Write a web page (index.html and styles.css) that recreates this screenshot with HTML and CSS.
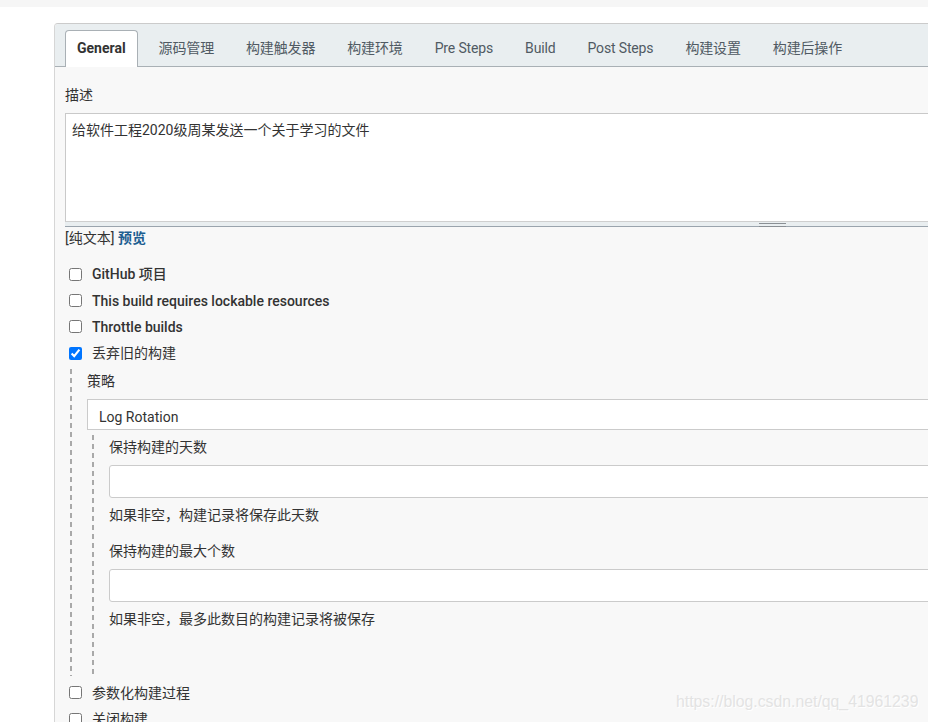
FILE: index.html
```html
<!DOCTYPE html>
<html lang="zh-CN">
<head>
    <meta charset="UTF-8">
    <meta name="viewport" content="width=device-width, initial-scale=1.0">
    <title>General - 配置</title>
    <link rel="stylesheet" href="styles.css">
</head>
<body>
    <div class="top-strip"></div>

    <div class="page">
        <div class="config">
            <div class="tabbar">
                <div class="tab active">General</div>
                <div class="tab">源码管理</div>
                <div class="tab">构建触发器</div>
                <div class="tab">构建环境</div>
                <div class="tab">Pre Steps</div>
                <div class="tab">Build</div>
                <div class="tab">Post Steps</div>
                <div class="tab">构建设置</div>
                <div class="tab">构建后操作</div>
            </div>

            <div class="section">
                <div class="field-label">描述</div>
                <textarea class="description" readonly>给软件工程2020级周某发送一个关于学习的文件</textarea>
                <div class="grip"><span class="grip-handle"></span></div>
                <div class="preview-line">[纯文本] <a class="preview-link" href="#">预览</a></div>

                <div class="options">
                    <label class="option"><input type="checkbox"><span class="option-text">GitHub 项目</span></label>
                    <label class="option"><input type="checkbox"><span class="option-text">This build requires lockable resources</span></label>
                    <label class="option"><input type="checkbox"><span class="option-text">Throttle builds</span></label>
                    <label class="option"><input type="checkbox" checked><span class="option-text cjk">丢弃旧的构建</span></label>
                </div>

                <div class="nested">
                    <div class="field-label">策略</div>
                    <div class="select-box"><span class="select-text">Log Rotation</span></div>

                    <div class="nested inner">
                        <div class="field">
                            <div class="field-label">保持构建的天数</div>
                            <input class="text-input" type="text">
                            <div class="help">如果非空，构建记录将保存此天数</div>
                        </div>
                        <div class="field">
                            <div class="field-label">保持构建的最大个数</div>
                            <input class="text-input" type="text">
                            <div class="help">如果非空，最多此数目的构建记录将被保存</div>
                        </div>
                    </div>
                </div>

                <div class="options after">
                    <label class="option"><input type="checkbox"><span class="option-text cjk">参数化构建过程</span></label>
                    <label class="option"><input type="checkbox"><span class="option-text cjk">关闭构建</span></label>
                </div>
            </div>
        </div>
    </div>

    <div class="watermark">https://blog.csdn.net/qq_41961239</div>
</body>
</html>
```

FILE: styles.css
```css
* {
    margin: 0;
    padding: 0;
    box-sizing: border-box;
}
html, body {
    height: 100%;
    overflow: hidden;
}
body {
    background: #fff;
    color: #333;
    font-family: Roboto, "Noto Sans CJK SC", sans-serif;
    font-size: 14px;
    line-height: 20px;
}
.top-strip {
    height: 7px;
    background: #f6f6f6;
}
.page {
    padding: 16px 0 0 54px;
}
.config {
    width: 1426px;
    border-top: 1px solid #cbcbcb;
    border-left: 1px solid #d6d6d6;
    border-radius: 4px 0 0 0;
    background: #f8f8f8;
    min-height: 700px;
}

/* tabs */
.tabbar {
    display: flex;
    align-items: flex-end;
    gap: 10px;
    height: 43px;
    padding: 0 10px;
    background: #e9eef0;
    border-radius: 4px 0 0 0;
    border-bottom: 1px solid #a9b0b5;
}
.tab {
    height: 37px;
    margin-bottom: -1px;
    padding: 0 10px;
    line-height: 35px;
    border: 1px solid transparent;
    border-bottom: none;
    border-radius: 4px 4px 0 0;
    color: #505a63;
    white-space: nowrap;
    letter-spacing: -0.15px;
}
.tab.active {
    background: #fff;
    border-color: #a9b0b5;
    color: #333;
    font-weight: 700;
    padding: 0 11px;
    letter-spacing: 0;
}

/* form */
.section {
    padding: 18px 0 0 10px;
}
.field-label {
    margin-bottom: 8px;
}
.description {
    display: block;
    width: 100%;
    height: 109px;
    padding: 6px;
    border: 1px solid #c9c9c9;
    border-bottom-color: #cfcfcf;
    background: #fff;
    color: #333;
    font: inherit;
    resize: none;
    outline: none;
}
.grip {
    height: 5px;
    background: #e9eef0;
    border-bottom: 1px solid #9aa4ad;
    display: flex;
    justify-content: center;
}
.grip-handle {
    width: 27px;
    height: 4px;
    border-top: 1px solid #8a8f94;
    border-bottom: 1px solid #8a8f94;
    margin-top: 1px;
}
.preview-line {
    margin-top: 1px;
}
.preview-link {
    color: #1c5e91;
    font-weight: 600;
    text-decoration: none;
}

.options {
    margin-top: 13px;
}
.option {
    display: flex;
    align-items: center;
    height: 26.4px;
}
.option input {
    width: 13px;
    height: 13px;
    margin: 0 3px 0 4px;
}
.option-text {
    margin-left: 7px;
    font-weight: 500;
}
.option-text.cjk {
    font-weight: 400;
}
.options.after {
    margin-top: 4px;
}

/* dashed nesting for sub-options */
.nested {
    margin: 2px 0 0 5px;
    padding: 2px 0 0 17px;
    background: linear-gradient(#a9a9a9 60%, transparent 0) left top / 2px 9px repeat-y;
}
.nested.inner {
    margin: 5px 0 0 5px;
    padding: 2px 0 47px 17px;
}
.select-box {
    height: 31px;
    padding: 7px 0 0 11px;
    background: #fff;
    border: 1px solid #cbcbcb;
    overflow: hidden;
}
.select-text {
    display: block;
    height: 19px;
    overflow: hidden;
}
.field + .field {
    margin-top: 16px;
}
.text-input {
    display: block;
    width: 100%;
    height: 33px;
    padding: 0 8px;
    background: #fff;
    border: 1px solid #cbcbcb;
    border-radius: 3px;
    font: inherit;
    outline: none;
}
.help {
    margin-top: 7px;
}

.watermark {
    position: absolute;
    left: 676px;
    top: 692px;
    font-family: "Liberation Sans", sans-serif;
    font-size: 15.8px;
    color: #e3e3e3;
    text-shadow: 1px 1px 0 #fff;
}
```
